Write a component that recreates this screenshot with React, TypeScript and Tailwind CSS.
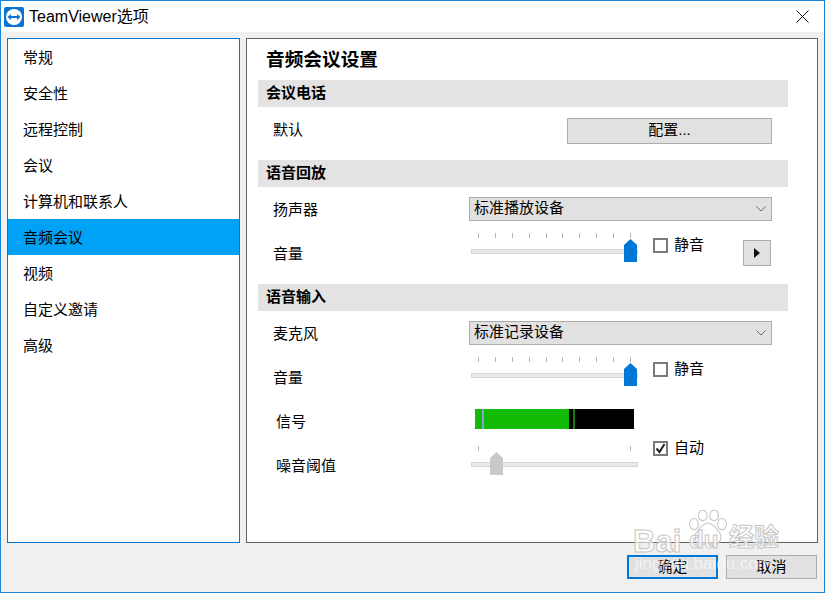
import React from 'react';

const FONT = "font-['Liberation_Sans','Noto_Sans_CJK_SC',sans-serif]";

const navItems = ['常规', '安全性', '远程控制', '会议', '计算机和联系人', '音频会议', '视频', '自定义邀请', '高级'];

const Section: React.FC<{ title: string }> = ({ title }) => (
  <div className="flex h-[27px] items-center bg-[#e3e3e3] pl-2 text-[15px] font-bold text-black">{title}</div>
);

const Chevron = () => (
  <svg width="10" height="6" viewBox="0 0 10 6" fill="none">
    <path d="M.5.5L5 5 9.5.5" stroke="#6a6a6a" strokeWidth="1" />
  </svg>
);

const Select: React.FC<{ value: string }> = ({ value }) => (
  <div className="flex h-[24px] w-[303px] items-center justify-between border border-[#adadad] bg-[#e1e1e1] pl-1 pr-[5px] text-[15px]">
    <span className="pb-[2px]">{value}</span>
    <Chevron />
  </div>
);

const Checkbox: React.FC<{ checked?: boolean; label: string }> = ({ checked, label }) => (
  <div className="flex items-center gap-[6px] text-[15px]">
    <div className="flex h-[15px] w-[15px] items-center justify-center border-2 border-[#7a7a7a] bg-white">
      {checked && (
        <svg width="11" height="11" viewBox="0 0 11 11" fill="none">
          <path d="M1.5 5.5l3 3.5 5-8" stroke="#222" strokeWidth="2" />
        </svg>
      )}
    </div>
    <span>{label}</span>
  </div>
);

const Slider: React.FC<{ ticks: number; thumbLeft: string; thumbColor: string }> = ({ ticks, thumbLeft, thumbColor }) => (
  <div className="relative h-[30px] w-[167px]">
    <div className="flex justify-between px-[7px] pt-[1px]">
      {Array.from({ length: ticks }).map((_, i) => (
        <div key={i} className="h-[5px] w-px bg-[#b5b5b5]" />
      ))}
    </div>
    <div className="mt-[11px] h-[5px] border border-[#d6d6d6] bg-[#e7eaea]" />
    <svg width="13" height="23" viewBox="0 0 13 23" className={`absolute top-[7px] ${thumbLeft}`}>
      <path d="M0 6L6.5 0 13 6V23H0z" fill={thumbColor} />
    </svg>
  </div>
);

const Row: React.FC<{ label: string; labelClass?: string; className?: string; children: React.ReactNode }> = ({
  label,
  labelClass = 'pl-[15px]',
  className = '',
  children,
}) => (
  <div className={`flex ${className}`}>
    <div className={`w-[211px] text-[15px] ${labelClass}`}>{label}</div>
    {children}
  </div>
);

const Logo = () => (
  <svg width="20" height="20" viewBox="0 0 20 20">
    <rect width="20" height="20" rx="2" fill="#0e73cf" />
    <circle cx="10" cy="10" r="8" fill="#fff" />
    <path d="M3.5 10l3.5-3v2h6V7l3.5 3-3.5 3v-2H7v2z" fill="#0e73cf" />
  </svg>
);

const Paw = () => (
  <svg width="42" height="37" viewBox="0 0 48 42" className="absolute left-[54px] top-0" fill="#ffffff" fillOpacity="0.6" stroke="#c6c6c6" strokeWidth="1.2">
    <ellipse cx="8" cy="16" rx="5" ry="6.5" />
    <ellipse cx="18" cy="6" rx="5" ry="6" />
    <ellipse cx="31" cy="6" rx="5" ry="6" />
    <ellipse cx="40" cy="16" rx="5" ry="6.5" />
    <path d="M24 15c-6 0-8 5-12 9-5 5-3 15 5 15 3 0 5-1 7-1s4 1 7 1c8 0 10-10 5-15-4-4-6-9-12-9z" />
  </svg>
);

export default function App() {
  return (
    <div className={`relative flex h-[593px] w-[825px] flex-col overflow-hidden border border-[#1a86d9] bg-[#f0f0f0] text-black ${FONT}`}>
      {/* title bar */}
      <div className="flex h-[31px] shrink-0 items-center justify-between bg-white pl-[3px] pr-[15px]">
        <div className="flex items-center gap-[5px]">
          <Logo />
          <span className="text-[16px]">TeamViewer选项</span>
        </div>
        <svg width="13" height="13" viewBox="0 0 13 13" fill="none">
          <path d="M.5.5l12 12M12.5.5l-12 12" stroke="#111" strokeWidth="1" />
        </svg>
      </div>

      {/* body */}
      <div className="flex flex-1 gap-[6px] pl-[6px] pr-[6px] pt-[6px]">
        <div className="h-[505px] w-[233px] border border-[#0078d7] bg-white">
          {navItems.map((item) => (
            <div
              key={item}
              className={`flex h-[36px] items-center pl-[15px] pt-[2px] text-[15px] ${item === '音频会议' ? 'bg-[#00a2f5]' : ''}`}
            >
              {item}
            </div>
          ))}
        </div>

        <div className="h-[505px] w-[572px] border border-[#646464] bg-white pl-[11px] pr-[29px]">
          <h1 className="flex h-[41px] items-center pl-2 text-[18.67px] font-bold">音频会议设置</h1>

          <Section title="会议电话" />
          <Row label="默认" className="h-[53px] items-center pb-[7px]">
            <div className="flex w-[303px] justify-end">
              <div className="mt-[1px] flex h-[26px] w-[205px] items-center justify-center border border-[#adadad] bg-[#e1e1e1] text-[15px]">
                配置...
              </div>
            </div>
          </Row>

          <Section title="语音回放" />
          <Row label="扬声器" labelClass="pl-[15px] pt-[2px]" className="mt-[10px] h-[24px] items-center">
            <Select value="标准播放设备" />
          </Row>
          <Row label="音量" labelClass="pl-[15px] pt-[11px]" className="mt-[11px] h-[52px]">
            <div className="ml-[2px] flex">
              <Slider ticks={10} thumbLeft="left-[153px]" thumbColor="#0078d7" />
              <div className="ml-[15px] mt-[2px] h-fit">
                <Checkbox label="静音" />
              </div>
              <div className="ml-[39px] mt-[8px] flex h-[26px] w-[28px] items-center justify-center border border-[#adadad] bg-[#e1e1e1]">
                <svg width="6" height="10" viewBox="0 0 6 10">
                  <path d="M0 0l6 5-6 5z" fill="#111" />
                </svg>
              </div>
            </div>
          </Row>

          <Section title="语音输入" />
          <Row label="麦克风" labelClass="pl-[15px] pt-[2px]" className="mt-[10px] h-[24px] items-center">
            <Select value="标准记录设备" />
          </Row>
          <Row label="音量" labelClass="pl-[15px] pt-[11px]" className="mt-[11px] h-[30px]">
            <div className="ml-[2px] flex">
              <Slider ticks={10} thumbLeft="left-[153px]" thumbColor="#0078d7" />
              <div className="ml-[15px] mt-[2px] h-fit">
                <Checkbox label="静音" />
              </div>
            </div>
          </Row>
          <Row label="信号" labelClass="pl-[18px] pt-[2px]" className="mt-[23px] h-[20px]">
            <div className="ml-[6px] flex h-[20px] w-[159px]">
              <div className="h-full w-[7px] bg-[#12bb05]" />
              <div className="h-full w-[2px] bg-[#8a9fd6]" />
              <div className="h-full w-[85px] bg-[#12bb05]" />
              <div className="h-full w-[4px] bg-black" />
              <div className="h-full w-[2px] bg-[#1a7a12]" />
              <div className="h-full flex-1 bg-black" />
            </div>
          </Row>
          <Row label="噪音阈值" labelClass="pl-[18px] pt-[10px]" className="mt-[16px] h-[30px]">
            <div className="ml-[2px] flex">
              <Slider ticks={2} thumbLeft="left-[19px]" thumbColor="#c9c9c9" />
              <div className="ml-[15px] -mt-[8px] h-fit">
                <Checkbox checked label="自动" />
              </div>
            </div>
          </Row>
        </div>
      </div>

      {/* footer */}
      <div className="flex h-[49px] shrink-0 justify-end gap-[8px] pr-[7px] pt-[12px]">
        <div className="flex h-[24px] w-[91px] items-center justify-center border-2 border-[#0078d7] bg-[#e1e1e1] text-[15px]">确定</div>
        <div className="flex h-[24px] w-[91px] items-center justify-center border border-[#adadad] bg-[#e1e1e1] text-[15px]">取消</div>
      </div>

      {/* watermark */}
      <div className="pointer-events-none absolute left-[632px] top-[509px] h-[60px] w-[155px]">
        <Paw />
        <span className="absolute left-0 top-[9px] text-[31px] font-bold text-white/70 [-webkit-text-stroke:1px_#c6c6c6]">Bai</span>
        <span className="absolute left-[56px] top-[12px] text-[24px] font-bold text-white/70 [-webkit-text-stroke:1px_#c6c6c6]">du</span>
        <span className="absolute left-[96px] top-[9px] text-[25px] font-bold text-white/70 [-webkit-text-stroke:1px_#c6c6c6]">经验</span>
      </div>
      <span className="pointer-events-none absolute left-[634px] top-[550px] text-[17px] text-white/60">jingyan.baidu.com</span>
    </div>
  );
}
